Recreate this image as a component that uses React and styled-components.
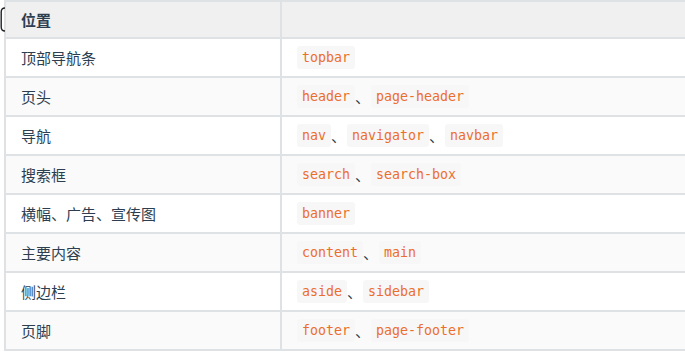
import React from 'react';
import styled, { createGlobalStyle } from 'styled-components';

const GlobalStyle = createGlobalStyle`
  html, body {
    margin: 0;
    padding: 0;
    background: #ffffff;
  }
  body {
    font-family: "Noto Sans CJK SC", "Noto Sans", sans-serif;
    color: #2c3e50;
  }
`;

const Page = styled.div`
  position: relative;
  padding-left: 4px;
  width: 685px;
  box-sizing: border-box;
`;

/* stray bracket peeking in at the left edge */
const Bracket = styled.svg`
  position: absolute;
  left: 0;
  top: 7px;
`;

const Table = styled.table`
  border-collapse: collapse;
  table-layout: fixed;
  width: 681px;
  font-size: 15px;
`;

const Col = styled.col`
  width: ${(props) => props.$width}px;
`;

const HeadCell = styled.th`
  background: #f0f0f0;
  border: 2px solid #dfe2e5;
  padding: 6px 15px;
  height: 23px;
  line-height: 23px;
  text-align: left;
  font-weight: 700;
`;

const Row = styled.tr`
  background: ${(props) => (props.$striped ? '#fafafa' : '#ffffff')};
`;

const Cell = styled.td`
  border: 2px solid #dfe2e5;
  padding: 7px 15px;
`;

const Line = styled.div`
  display: flex;
  align-items: center;
  height: 23px;
  line-height: 23px;
  white-space: nowrap;
`;

const Code = styled.code`
  display: block;
  font-family: "DejaVu Sans Mono", "Liberation Mono", monospace;
  font-size: 13.3px;
  line-height: 23px;
  padding: 0 5px;
  color: #ec6e2a;
  background: #f7f7f7;
  border-radius: 3px;
`;

const Sep = styled.span`
  display: block;
  width: 15px;
  margin-right: 1px;
  font-size: 15px;
`;

const rows = [
  ['顶部导航条', ['topbar']],
  ['页头', ['header', 'page-header']],
  ['导航', ['nav', 'navigator', 'navbar']],
  ['搜索框', ['search', 'search-box']],
  ['横幅、广告、宣传图', ['banner']],
  ['主要内容', ['content', 'main']],
  ['侧边栏', ['aside', 'sidebar']],
  ['页脚', ['footer', 'page-footer']],
];

const App = () => (
  <Page>
    <GlobalStyle />
    <Bracket width="6" height="25" viewBox="0 0 6 25">
      <path d="M5 1 Q1.2 1 1.2 5 L1.2 20 Q1.2 24 5 24" fill="none" stroke="#222" strokeWidth="1.4" />
    </Bracket>
    <Table>
      <colgroup>
        <Col $width={276} />
        <Col $width={405} />
      </colgroup>
      <thead>
        <tr>
          <HeadCell>位置</HeadCell>
          <HeadCell />
        </tr>
      </thead>
      <tbody>
        {rows.map(([place, names], i) => (
          <Row key={place} $striped={i % 2 === 1}>
            <Cell>
              <Line>{place}</Line>
            </Cell>
            <Cell>
              <Line>
                {names.map((n, j) => (
                  <React.Fragment key={n}>
                    {j > 0 && <Sep>、</Sep>}
                    <Code>{n}</Code>
                  </React.Fragment>
                ))}
              </Line>
            </Cell>
          </Row>
        ))}
      </tbody>
    </Table>
  </Page>
);

export default App;
